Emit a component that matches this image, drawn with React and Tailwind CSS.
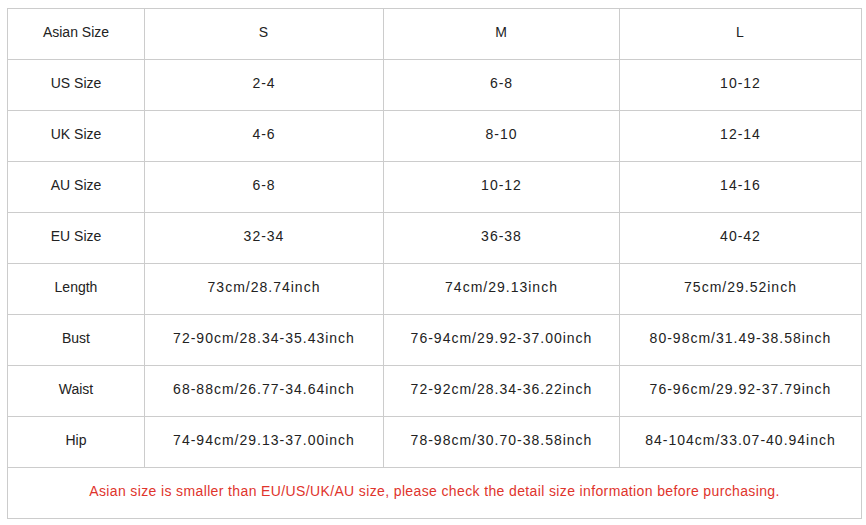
const rows = [
  ["Asian Size", "S", "M", "L"],
  ["US Size", "2-4", "6-8", "10-12"],
  ["UK Size", "4-6", "8-10", "12-14"],
  ["AU Size", "6-8", "10-12", "14-16"],
  ["EU Size", "32-34", "36-38", "40-42"],
  ["Length", "73cm/28.74inch", "74cm/29.13inch", "75cm/29.52inch"],
  ["Bust", "72-90cm/28.34-35.43inch", "76-94cm/29.92-37.00inch", "80-98cm/31.49-38.58inch"],
  ["Waist", "68-88cm/26.77-34.64inch", "72-92cm/28.34-36.22inch", "76-96cm/29.92-37.79inch"],
  ["Hip", "74-94cm/29.13-37.00inch", "78-98cm/30.70-38.58inch", "84-104cm/33.07-40.94inch"],
];

export default function App() {
  return (
    <div className="w-[866px] h-[525px] bg-white pt-[8px] pl-[7px]" style={{ fontFamily: '"Liberation Sans", Arial, sans-serif' }}>
      <div className="grid grid-cols-[137px_239px_236px_242px] border-t border-l border-[#cccccc] w-[855px] text-[14px] text-[#222]">
        {rows.map((r, i) =>
          r.map((c, j) => (
            <div key={i + "-" + j} className="h-[51px] border-r border-b border-[#cccccc] flex items-center justify-center pb-[4px]">
              <span className={j === 0 ? "" : "tracking-[1px]"}>{c}</span>
            </div>
          ))
        )}
        <div className="col-span-4 h-[51px] border-r border-b border-[#cccccc] flex items-center justify-center pb-[4px] text-[#e0342c] tracking-[0.37px]">
          Asian size is smaller than EU/US/UK/AU size, please check the detail size information before purchasing.
        </div>
      </div>
    </div>
  );
}
